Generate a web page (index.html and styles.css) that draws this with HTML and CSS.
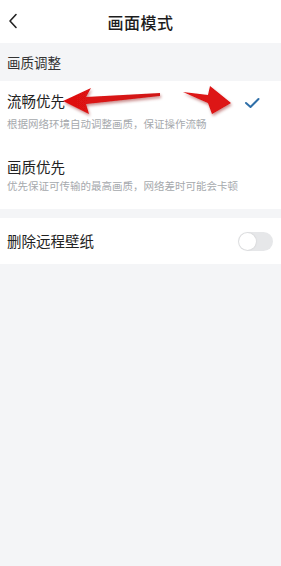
FILE: index.html
```html
<!DOCTYPE html>
<html lang="zh">
<head>
<meta charset="utf-8">
<link rel="stylesheet" href="styles.css">
</head>
<body>
<div class="page">
  <header class="topbar">
    <svg class="back" width="10" height="16" viewBox="0 0 10 16"><path d="M8 1.5 L2 8 L8 14.5" fill="none" stroke="#222" stroke-width="1.6" stroke-linecap="round" stroke-linejoin="round"/></svg>
    <div class="title">画面模式</div>
  </header>
  <div class="section-label">画质调整</div>
  <div class="group">
    <div class="option first">
      <div class="texts">
        <div class="opt-title">流畅优先</div>
        <div class="opt-desc">根据网络环境自动调整画质，保证操作流畅</div>
      </div>
      <svg class="check" width="16" height="12" viewBox="0 0 16 12"><path d="M2 6 L6.5 10 L14.5 2" fill="none" stroke="#2f6fa8" stroke-width="2" stroke-linecap="round" stroke-linejoin="round"/></svg>
    </div>
    <div class="option second">
      <div class="texts">
        <div class="opt-title">画质优先</div>
        <div class="opt-desc">优先保证可传输的最高画质，网络差时可能会卡顿</div>
      </div>
    </div>
  </div>
  <div class="group gap">
    <div class="switch-row">
      <div class="opt-title">删除远程壁纸</div>
      <div class="toggle"><div class="knob"></div></div>
    </div>
  </div>
  <svg class="arrows" width="281" height="140" viewBox="0 0 281 140">
    <defs>
      <filter id="sh" x="-20%" y="-50%" width="140%" height="200%">
        <feDropShadow dx="1" dy="2" stdDeviation="1.5" flood-color="#800" flood-opacity="0.45"/>
      </filter>
      <linearGradient id="g1" x1="0" y1="0" x2="1" y2="0">
        <stop offset="0" stop-color="#e01010"/>
        <stop offset="1" stop-color="#d01818"/>
      </linearGradient>
    </defs>
    <path filter="url(#sh)" fill="url(#g1)" d="M63 101 L91 88 L86 97 L160 93 L160 96 L86 104 L89 114 Z"/>
    <path filter="url(#sh)" fill="#dd1212" d="M183 92 L208 95 L210 86 L231 103 L212 114 L208 103 Z"/>
  </svg>
</div>
</body>
</html>
```
FILE: styles.css
```css
* { box-sizing: border-box; margin: 0; padding: 0; }
html, body { width: 281px; height: 566px; }
body {
  background: #f4f5f7;
  font-family: "Noto Sans CJK SC", "Noto Sans", sans-serif;
  color: #222;
  overflow: hidden;
}
.page { position: relative; width: 281px; min-height: 566px; }
.topbar {
  height: 43px;
  background: #fff;
  display: flex;
  align-items: center;
  justify-content: center;
  position: relative;
}
.back { position: absolute; left: 8px; top: 13px; }
.title { font-size: 16px; font-weight: 500; color: #1c1c1c; letter-spacing: 0.5px; }
.section-label {
  height: 38px;
  display: flex;
  align-items: center;
  padding-left: 7px;
  font-size: 13.5px;
  color: #333;
}
.group { background: #fff; }
.group.gap { margin-top: 9px; }
.option {
  display: flex;
  align-items: flex-start;
  justify-content: space-between;
  padding: 10px 21px 0 7px;
}
.option.first { height: 66px; }
.option.second { height: 62px; }
.opt-title { font-size: 14.5px; color: #222; line-height: 20px; }
.opt-desc { font-size: 10.5px; color: #a6a9ad; line-height: 16px; margin-top: 5px; }
.option.second .opt-desc { margin-top: 1px; }
.check { margin-top: 6px; }
.switch-row {
  height: 46px;
  display: flex;
  align-items: center;
  justify-content: space-between;
  padding: 0 8px 0 7px;
}
.toggle {
  width: 35px;
  height: 19px;
  border-radius: 10px;
  background: #e6e7e9;
  position: relative;
}
.knob {
  position: absolute;
  left: 1px; top: 1px;
  width: 17px; height: 17px;
  border-radius: 50%;
  background: #fff;
  box-shadow: 0 0 2px rgba(0,0,0,0.15);
}
.arrows { position: absolute; left: 0; top: 0; pointer-events: none; }
```
